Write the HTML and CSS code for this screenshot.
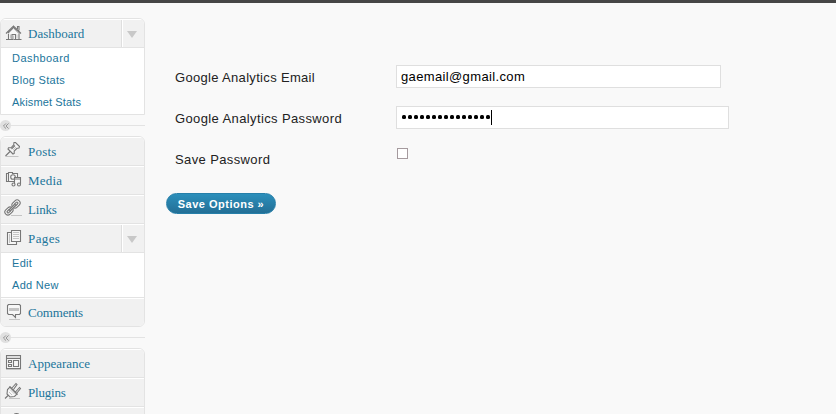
FILE: index.html
```html
<!DOCTYPE html>
<html lang="en">
<head>
<meta charset="utf-8">
<title>Google Analytics Options</title>
<link rel="stylesheet" href="styles.css">
</head>
<body>
<header class="topbar"></header>
<div class="layout">
  <nav class="menu">
    <section class="group">
      <div class="row">
        <svg class="icon low" viewBox="0 0 18 18"><path class="fill" d="M3.500 8v7.500h10.500V8L8.500 3.500z"/><path d="M1 9.500 8.500 2 16 9.500M12.500 5V2.500h1.500v4M7 15.500V10.500h3.500v5M1 15.500h15.500"/><path class="light" d="M3 10l5.500-5.500L14 10M8.500 11.500v4M5.500 10.500v4M12 10.500v4"/></svg>
        <a class="snug">Dashboard</a><span class="toggle"></span>
      </div>
      <ul class="sub"><li class="loose">Dashboard</li><li>Blog Stats</li><li class="snug">Akismet Stats</li></ul>
    </section>
    <div class="separator"><span class="knob"><svg viewBox="0 0 7 7"><path d="M3.500 .5l-3 3 3 3M6.500 .5l-3 3 3 3"/></svg></span></div>
    <section class="group">
      <div class="row">
        <svg class="icon lean" viewBox="0 0 18 18"><path class="fill" d="M10 1.500h1.500l4 4-.5 1.500-2 .3-2.800 2.700v2.500l-1.200.5-5-5 .5-1.200h2.500l2.700-2.800z"/><path d="M6 10.500 1.500 15M7.500 8l3.500-3.500"/><path class="light" d="M1.500 15.500h13M9 9l3-3"/></svg>
        <a>Posts</a>
      </div>
      <div class="row">
        <svg class="icon" viewBox="0 0 18 18"><path class="fill" d="M1.500 3.500h2v-1h4v1h5v8h-11z"/><path d="M3.500 4v7"/><circle cx="8" cy="7" r="2.300"/><path class="fill" d="M9.500 14V7.500h6V14M9.500 9h6"/><circle class="fill" cx="8.500" cy="14.500" r="1.500"/><circle class="fill" cx="14" cy="14.500" r="1.500"/></svg>
        <a>Media</a>
      </div>
      <div class="row">
        <svg class="icon lean" viewBox="0 0 18 18"><g transform="rotate(-45 8.500 8.500)"><rect class="fill" x="-1" y="5.500" width="9" height="6" rx="3"/><rect x="1.200" y="7.500" width="4.600" height="2" rx="1"/><rect class="fill" x="9" y="5.500" width="9" height="6" rx="3"/><rect x="11.200" y="7.500" width="4.600" height="2" rx="1"/><path class="fill" d="M4.500 7.800h8v1.500h-8z"/></g><path class="light" d="M7 16.500h11"/></svg>
        <a class="tight">Links</a>
      </div>
      <div class="row">
        <svg class="icon" viewBox="0 0 18 18"><path class="fill" d="M2.500 4.500h9v12h-9z"/><path class="fill" d="M6.500 2.500h9v11h-9z"/><path class="light" d="M8 4.500h6M8 6.500h6M8 8.500h6M8 10.500h6M4.500 6v9"/></svg>
        <a class="loose">Pages</a><span class="toggle"></span>
      </div>
      <ul class="sub"><li>Edit</li><li>Add New</li></ul>
      <div class="row after-sub">
        <svg class="icon" viewBox="0 0 18 18"><path class="fill" d="M3.500 2.500h11l1 1v8l-1 1h-4v3l-3-3h-4l-1-1v-8z"/><path class="light" d="M4 6.500h10M4 7.500h10M4 8.500h10M4 17.500h11"/></svg>
        <a class="tight">Comments</a>
      </div>
    </section>
    <div class="separator"><span class="knob"><svg viewBox="0 0 7 7"><path d="M3.500 .5l-3 3 3 3M6.500 .5l-3 3 3 3"/></svg></span></div>
    <section class="group">
      <div class="row">
        <svg class="icon" viewBox="0 0 18 18"><path class="fill" d="M1.500 2.500h14v13h-14z"/><path d="M2 5.500h13M8.500 7.500h5v6h-5zM3.500 7.500h3v2h-3zM3.500 11.500h3v2h-3z"/><path class="light" d="M2 4h13M1 16.500h15"/></svg>
        <a class="snug">Appearance</a>
      </div>
      <div class="row">
        <svg class="icon lean" viewBox="0 0 18 18"><path class="fill" d="M6 5l7 7-2.500 2.500-4.500.5-3-3 .5-4.500z"/><path class="fill" d="M5.500 4.500l8 8M8 6l4-4.500 1 1-3.500 5M11.500 10l4-4.500 1 1-4 5M4 13.500l-3 3"/><path class="light" d="M6 7.500l4.500 4.500M5 10l3 3M5 16.500h11"/></svg>
        <a class="tight">Plugins</a>
      </div>
      <div class="row">
        <svg class="icon" viewBox="0 0 18 18"><circle class="fill" cx="11.500" cy="5.500" r="3"/></svg>
      </div>
    </section>
  </nav>
  <main class="form">
    <div class="field"><label class="first" for="email">Google Analytics Email</label><input id="email" class="text" type="text" value="gaemail@gmail.com"></div>
    <div class="field"><label for="pass">Google Analytics Password</label><div id="pass" class="text wide"><span class="dots"><i></i><i></i><i></i><i></i><i></i><i></i><i></i><i></i><i></i><i></i><i></i><i></i><i></i><i></i><i></i></span><span class="caret"></span></div></div>
    <div class="field"><label for="save">Save Password</label><input id="save" class="check" type="checkbox"></div>
    <button class="save" type="button">Save Options »</button>
  </main>
</div>
</body>
</html>
```
FILE: styles.css
```css
* { box-sizing: border-box; }
body { margin: 0; height: 414px; overflow: hidden; background: #f9f9f9; font-family: "Liberation Sans", Arial, sans-serif; }
.topbar { height: 3px; background: #464646; }
.layout { display: flex; align-items: flex-start; height: 411px; overflow: hidden; }
.menu { width: 145px; padding-top: 15px; flex: none; }
.group { border: 1px solid #e3e3e3; border-radius: 6px; background: #fff; overflow: hidden; }
.group:first-child { border-radius: 6px 6px 0 0; }
.row { display: flex; align-items: center; height: 29px; background: #f1f1f1; border-top: 1px solid #fff; border-bottom: 1px solid #e3e3e3; padding-left: 4px; }
.row:last-child { border-bottom: 0; height: 28px; }
.row.after-sub:last-child { border-top: 1px solid #e3e3e3; height: 29px; box-shadow: inset 0 1px #fff; }
.icon { align-self: flex-start; width: 18px; height: 18px; margin: 3px 5px 0 0; flex: none; fill: none; stroke: #777; stroke-width: 1.1; }
.icon.low, .after-sub .icon { margin-top: 4px; }
.icon.lean { margin: 3px 6px 0 -1px; }
.icon .fill { fill: #f7f7f7; }
.icon .light { stroke: #c4c4c4; stroke-width: 1; }
.row a { flex: 1; color: #21759b; font: 13px/18px "Liberation Serif", "Times New Roman", serif; letter-spacing: .2px; padding-top: 1px; }
.row a.snug { letter-spacing: 0; }
.row a.tight { letter-spacing: -.18px; }
.row a.loose { letter-spacing: .4px; }
.toggle { width: 23px; height: 27px; border-left: 1px solid #dfdfdf; box-shadow: inset 1px 0 #fff; display: flex; align-items: center; justify-content: center; }
.toggle::after { content: ""; border: solid transparent; border-width: 7px 5px 0; border-top-color: #c8c8c8; margin: 1px 2px 0 0; }
.sub { margin: 0; padding: 0 0 0 11px; list-style: none; background: #fff; }
.sub li { height: 22px; color: #21759b; font-size: 11px; line-height: 21px; letter-spacing: .3px; }
.sub .loose { letter-spacing: .45px; }
.sub .snug { letter-spacing: .15px; }
.separator { height: 21px; display: flex; align-items: center; }
.separator::after { content: ""; flex: 1; height: 1px; background: #e3e3e3; }
.knob { width: 11px; height: 11px; border-radius: 50%; background: #e0e0e0; display: flex; align-items: center; justify-content: center; }
.knob svg { width: 6px; height: 6px; fill: none; stroke: #888; }
.form { padding: 62px 0 0 21px; }
.field { display: flex; height: 41px; padding-left: 9px; align-items: flex-start; }
.field label { width: 221px; color: #222; font-size: 13px; line-height: 18px; letter-spacing: .38px; padding-top: 4px; }
.field .first { letter-spacing: .32px; }
.text { width: 325px; height: 23px; border: 1px solid #dfdfdf; background: #fff; padding: 0 4px; font: 13px "Liberation Sans", Arial, sans-serif; letter-spacing: .36px; color: #000; outline: 0; }
.wide { width: 333px; display: flex; align-items: center; }
.dots { display: flex; gap: 2px; margin-top: -1px; padding-left: 1px; }
.dots i { width: 4px; height: 4px; border-radius: 1.5px; background: #000; }
.caret { width: 1px; height: 15px; margin-left: 1px; background: #000; }
.check { appearance: none; width: 11px; height: 11px; margin: 1px 0 0 1px; border: 1px solid #a59a9e; background: #fff; }
.save { display: block; margin-top: 5px; width: 110px; height: 21px; padding: 0; border: 1px solid #267fa9; border-radius: 11px; background: linear-gradient(#2c8fbb, #236f96); color: #fff; font: bold 11px/18px "Liberation Sans", Arial, sans-serif; letter-spacing: .5px; }
```
